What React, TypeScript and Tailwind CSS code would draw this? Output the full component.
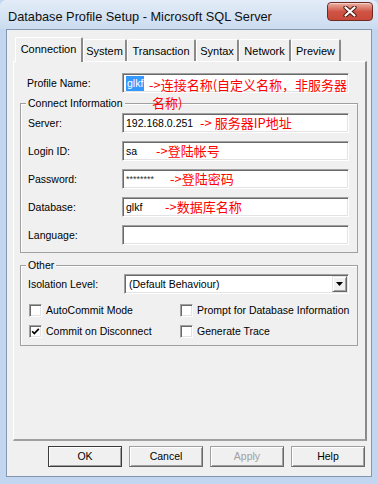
import React from "react";

const sunken =
  "bg-white border border-t-[#a0a0a0] border-l-[#a0a0a0] border-r-white border-b-white shadow-[inset_1px_1px_0_#696969,inset_-1px_-1px_0_#e3e3e3]";

const raised =
  "bg-[#f0f0f0] border border-t-[#e3e3e3] border-l-[#e3e3e3] border-r-[#696969] border-b-[#696969] shadow-[inset_1px_1px_0_#fff,inset_-1px_-1px_0_#a0a0a0]";

const cjk = "font-['Noto_Sans_CJK_SC','Noto_Sans_CJK_JP',sans-serif] text-[13px] leading-[18px] text-[#ff0000] whitespace-nowrap";

const tabs = [
  { name: "System", w: "w-[44px]" },
  { name: "Transaction", w: "w-[69px]" },
  { name: "Syntax", w: "w-[43px]" },
  { name: "Network", w: "w-[52px]" },
  { name: "Preview", w: "w-[50px]" },
];

const CloseButton = () => (
  <div className="mt-[2px] w-[46px] h-[19px] rounded-[4px] border border-[#6e2b22] bg-gradient-to-b from-[#eab1a5] via-[#cf5445] to-[#c9483a] shadow-[inset_0_1px_0_#f5d0c8] flex items-center justify-center">
    <svg width="14" height="11" viewBox="0 0 14 11">
      <path d="M2.5 1.5 L11.5 9.5 M11.5 1.5 L2.5 9.5" stroke="#4a1a14" strokeWidth="4.2" strokeLinecap="round" />
      <path d="M2.5 1.5 L11.5 9.5 M11.5 1.5 L2.5 9.5" stroke="#ffffff" strokeWidth="2.2" strokeLinecap="round" />
    </svg>
  </div>
);

const Field = ({ children, className = "" }: { children?: React.ReactNode; className?: string }) => (
  <div className={`relative h-[20px] w-[227px] flex items-center pl-[3px] ${sunken} ${className}`}>{children}</div>
);

const Note = ({ left, children }: { left: string; children: React.ReactNode }) => (
  <span className={`absolute top-[0px] ${left} ${cjk}`}>{children}</span>
);

const Row = ({ label, children }: { label: string; children?: React.ReactNode }) => (
  <div className="flex items-center">
    <span className="w-[94px]">{label}</span>
    {children}
  </div>
);

const CheckBox = ({ checked = false, label }: { checked?: boolean; label: string }) => (
  <div className="flex items-center gap-[4px]">
    <span className={`w-[13px] h-[13px] flex items-center justify-center shrink-0 ${sunken}`}>
      {checked && (
        <svg width="9" height="9" viewBox="0 0 9 9">
          <polyline points="1.2,4.2 3.3,6.6 7.8,1.8" fill="none" stroke="#000" strokeWidth="1.7" />
        </svg>
      )}
    </span>
    <span>{label}</span>
  </div>
);

const Button = ({ children, def = false, disabled = false }: { children: React.ReactNode; def?: boolean; disabled?: boolean }) => (
  <button
    className={`w-[74px] h-[21px] flex items-center justify-center bg-[#f0f0f0] border ${
      def ? "border-[#3c3c3c]" : "border-[#a0a0a0] border-r-[#696969] border-b-[#696969]"
    } shadow-[inset_1px_1px_0_#fff,inset_-1px_-1px_0_#a0a0a0] ${disabled ? "text-[#a0a0a0]" : "text-black"}`}
  >
    {children}
  </button>
);

export default function App() {
  return (
    <div className="w-[378px] h-[484px] overflow-hidden bg-[#c2d7ef] flex flex-col font-['Liberation_Sans',Arial,sans-serif] text-[10.5px] leading-[13px] text-black">
      {/* Title bar */}
      <div className="h-[29px] shrink-0 flex items-start justify-between pl-[8px] pr-[5px] bg-gradient-to-b from-[#e3ecf7] to-[#cbdcf0] rounded-t-[6px]">
        <span className="mt-[9px] text-[12.75px] leading-[15px] text-[#101010]">
          Database Profile Setup - Microsoft SQL Server
        </span>
        <CloseButton />
      </div>

      {/* Client area */}
      <div className="mx-[6px] mb-[7px] flex-1 border border-[#8497b0] bg-[#f0f0f0] flex flex-col pt-[7px] pl-[6px]">
        {/* Tabs */}
        <div className="h-[24px] flex items-end pl-[2px] text-[11px]">
          <div className="relative z-10 -mb-[1px] w-[68px] h-[25px] flex items-start justify-center pt-[5px] bg-[#f0f0f0] border-l border-t border-white border-r-2 border-r-[#8a8a8a] rounded-t-[2px]">
            Connection
          </div>
          {tabs.map((t) => (
            <div
              key={t.name}
              className={`${t.w} h-[22px] flex items-start justify-center pt-[5px] bg-[#f0f0f0] border-l border-t border-white border-r-2 border-r-[#8a8a8a] rounded-t-[2px]`}
            >
              {t.name}
            </div>
          ))}
        </div>

        {/* Panel */}
        <div className="w-[354px] h-[380px] bg-[#f0f0f0] border-l border-t border-white border-r-2 border-r-[#8a8a8a] border-b-2 border-b-[#a0a0a0] pt-[11px]">
          <div className="flex items-center pl-[13px]">
            <span className="w-[95px]">Profile Name:</span>
            <Field>
              <span className="bg-[#3399ff] text-white px-[1px] leading-[15px]">glkf</span>
              <span className={`absolute left-[26px] top-[2px] ${cjk}`}>
                {"->连接名称(自定义名称，非服务器"}
                <br />
                <span className="pl-[3px]">名称)</span>
              </span>
            </Field>
          </div>

          {/* Connect Information */}
          <fieldset className="mt-[4px] ml-[6px] w-[338px] border border-[#a0a0a0] shadow-[inset_1px_1px_0_#fff] pb-[7px]">
            <legend className="ml-[5px] px-[2px] leading-[13px] bg-[#f0f0f0]">Connect Information</legend>
            <div className="pl-[7px] pt-[3px] flex flex-col gap-[8px]">
              <Row label="Server:">
                <Field>
                  192.168.0.251
                  <Note left="left-[77px]">{"-> 服务器IP地址"}</Note>
                </Field>
              </Row>
              <Row label="Login ID:">
                <Field>
                  sa
                  <Note left="left-[33px]">{"->登陆帐号"}</Note>
                </Field>
              </Row>
              <Row label="Password:">
                <Field>
                  <span className="text-[9px] tracking-[0px] text-[#333]">********</span>
                  <Note left="left-[47px]">{"->登陆密码"}</Note>
                </Field>
              </Row>
              <Row label="Database:">
                <Field>
                  glkf
                  <Note left="left-[42px]">{"->数据库名称"}</Note>
                </Field>
              </Row>
              <Row label="Language:">
                <Field />
              </Row>
            </div>
          </fieldset>

          {/* Other */}
          <fieldset className="mt-[6px] ml-[6px] w-[338px] border border-[#a0a0a0] shadow-[inset_1px_1px_0_#fff] pb-[7px]">
            <legend className="ml-[5px] px-[2px] leading-[13px] bg-[#f0f0f0]">Other</legend>
            <div className="pl-[7px] pt-[2px]">
              <div className="flex items-center">
                <span className="w-[96px]">Isolation Level:</span>
                <div className={`h-[20px] w-[225px] flex items-center justify-between pl-[4px] ${sunken}`}>
                  <span>(Default Behaviour)</span>
                  <span className={`w-[15px] h-[16px] mr-[1px] flex items-center justify-center ${raised}`}>
                    <svg width="7" height="4" viewBox="0 0 7 4">
                      <polygon points="0,0 7,0 3.5,4" fill="#000" />
                    </svg>
                  </span>
                </div>
              </div>
              <div className="mt-[10px] pl-[1px] flex">
                <div className="w-[151px]">
                  <CheckBox label="AutoCommit Mode" />
                </div>
                <CheckBox label="Prompt for Database Information" />
              </div>
              <div className="mt-[8px] pl-[1px] flex">
                <div className="w-[151px]">
                  <CheckBox checked label="Commit on Disconnect" />
                </div>
                <CheckBox label="Generate Trace" />
              </div>
            </div>
          </fieldset>
        </div>

        {/* Buttons */}
        <div className="mt-[5px] flex justify-end gap-[7px] pr-[6px]">
          <Button def>OK</Button>
          <Button>Cancel</Button>
          <Button disabled>Apply</Button>
          <Button>Help</Button>
        </div>
      </div>
    </div>
  );
}
